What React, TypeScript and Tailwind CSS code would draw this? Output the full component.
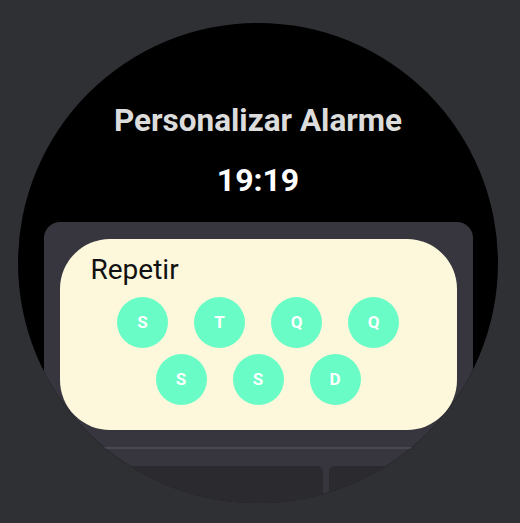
import React from "react";

const days = ["S", "T", "Q", "Q", "S", "S", "D"];

function DayButton({ label }: { label: string }) {
  return (
    <button className="flex h-[51px] w-[51px] items-center justify-center rounded-full bg-[#69fcc6] text-[17px] font-bold text-white">
      {label}
    </button>
  );
}

export default function App() {
  return (
    <div
      className="h-[523px] w-[520px] bg-[#2f3034] pl-[18px] pt-[23px]"
      style={{ fontFamily: "Roboto, 'Noto Sans', sans-serif" }}
    >
      <div className="flex h-[480px] w-[480px] flex-col items-center overflow-hidden rounded-full bg-black">
        <h1 className="mt-[80px] text-[31.5px] font-bold leading-[36px] text-[#dcdcdc]">
          Personalizar Alarme
        </h1>
        <p className="mt-[21px] text-[32px] font-bold leading-[40px] text-white">19:19</p>

        <div className="mt-[22px] w-[429px] flex-1 rounded-t-[16px] bg-[#37363e] px-4 pt-[17px]">
          <div className="h-[191px] rounded-[50px] bg-[#fdf8dc] px-[31px] pt-[14px]">
            <h2 className="text-[28px] leading-[33px] text-[#111111]">Repetir</h2>
            <div className="mt-[11px] flex flex-wrap justify-center gap-x-[26px] gap-y-[6px]">
              {days.map((d, i) => (
                <DayButton key={i} label={d} />
              ))}
            </div>
          </div>

          <div className="mt-[17px] h-[2px] bg-[#4a4952]" />

          <div className="mt-[17px] flex gap-[6px]">
            <div className="h-[60px] w-[263px] rounded-t-[6px] bg-[#2b2a2f]" />
            <div className="h-[60px] flex-1 rounded-t-[6px] bg-[#2b2a2f]" />
          </div>
        </div>
      </div>
    </div>
  );
}
